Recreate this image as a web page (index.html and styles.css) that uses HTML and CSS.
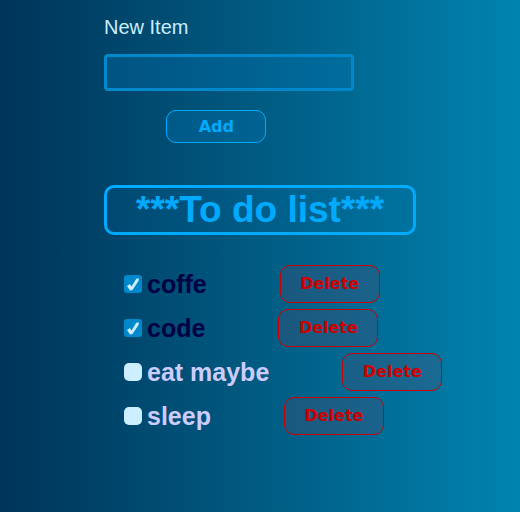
FILE: index.html
```html
<!DOCTYPE html>
<html lang="en">
<head>
<meta charset="utf-8">
<meta name="viewport" content="width=device-width, initial-scale=1">
<title>To do list</title>
<link rel="stylesheet" href="styles.css">
</head>
<body>
<main class="app">
  <form class="new-item">
    <label class="new-item-label" for="item">New Item</label>
    <input class="new-item-input" type="text" id="item">
    <button class="btn btn-add" type="button">Add</button>
  </form>
  <h1 class="title">***To do list***</h1>
  <ul class="list">
    <li class="row"><label class="todo"><input class="check" type="checkbox" checked><span class="name">coffe</span></label><button class="btn btn-delete" type="button">Delete</button></li>
    <li class="row"><label class="todo"><input class="check" type="checkbox" checked><span class="name">code</span></label><button class="btn btn-delete" type="button">Delete</button></li>
    <li class="row"><label class="todo"><input class="check" type="checkbox"><span class="name">eat maybe</span></label><button class="btn btn-delete" type="button">Delete</button></li>
    <li class="row"><label class="todo"><input class="check" type="checkbox"><span class="name">sleep</span></label><button class="btn btn-delete" type="button">Delete</button></li>
  </ul>
</main>
</body>
</html>
```
FILE: styles.css
```css
* {
  box-sizing: border-box;
}

body {
  margin: 0;
  min-height: 100vh;
  background: linear-gradient(to right, #003459, #005b82 50%, #0084b0);
  color: #cef;
  font-family: "Liberation Sans", Arial, sans-serif;
}

.app {
  width: 60%;
  min-width: 312px;
  margin: 0 auto;
  padding-top: 16px;
}

.new-item {
  display: flex;
  flex-direction: column;
  align-items: flex-start;
}

.new-item-label {
  font-size: 20px;
  line-height: 22px;
}

.new-item-input {
  width: 80%;
  height: 37px;
  margin-top: 16px;
  padding: 4px 8px;
  border: 3px solid #08c;
  border-radius: 4px;
  outline: none;
  background: rgba(0, 119, 187, 0.3);
  color: #cef;
  font: inherit;
  font-size: 20px;
}

.btn {
  flex-shrink: 0;
  width: 100px;
  border: 1px solid;
  border-radius: 10px;
  font-family: "Arial Black", "DejaVu Sans", sans-serif;
  font-size: 16px;
  font-weight: 900;
  line-height: 20px;
  cursor: pointer;
}

.btn-add {
  height: 33px;
  margin: 19px 0 0 20%;
  padding: 0;
  border-color: #0af;
  background: rgba(0, 119, 187, 0.3);
  color: #0af;
}

.title {
  width: max-content;
  margin: 42px 0 30px;
  padding: 0 29px;
  border: 3px solid #0af;
  border-radius: 10px;
  background: rgba(0, 119, 187, 0.1);
  color: #0af;
  font-size: 37px;
  line-height: 44px;
}

.list {
  display: flex;
  flex-direction: column;
  gap: 6px;
  margin: 0;
  padding: 0 0 0 20px;
  list-style: none;
}

.row {
  display: flex;
  align-items: center;
  gap: 73px;
}

.todo {
  display: flex;
  align-items: center;
  gap: 5px;
  color: #ccf;
  font-size: 25px;
  font-weight: bold;
  line-height: 28px;
  white-space: nowrap;
}

.check {
  appearance: none;
  width: 18px;
  height: 18px;
  margin: 0;
  border-radius: 5px;
  background: #cef;
}

.check:checked {
  border-radius: 3px;
  background: #08c url("data:image/svg+xml,%3Csvg xmlns='http://www.w3.org/2000/svg' viewBox='0 0 18 18'%3E%3Cpath d='M3 11 6 9 7.5 11.5 12.5 3.5 15 3.5 14.5 6 8.5 15 6 15.5Z' fill='%23cef'/%3E%3C/svg%3E") center / 18px 18px no-repeat;
}

.todo:has(:checked) {
  color: #004;
}

.btn-delete {
  height: 38px;
  padding: 0;
  border-color: #c00;
  background: rgba(102, 68, 102, 0.25);
  color: #c00;
}
```
